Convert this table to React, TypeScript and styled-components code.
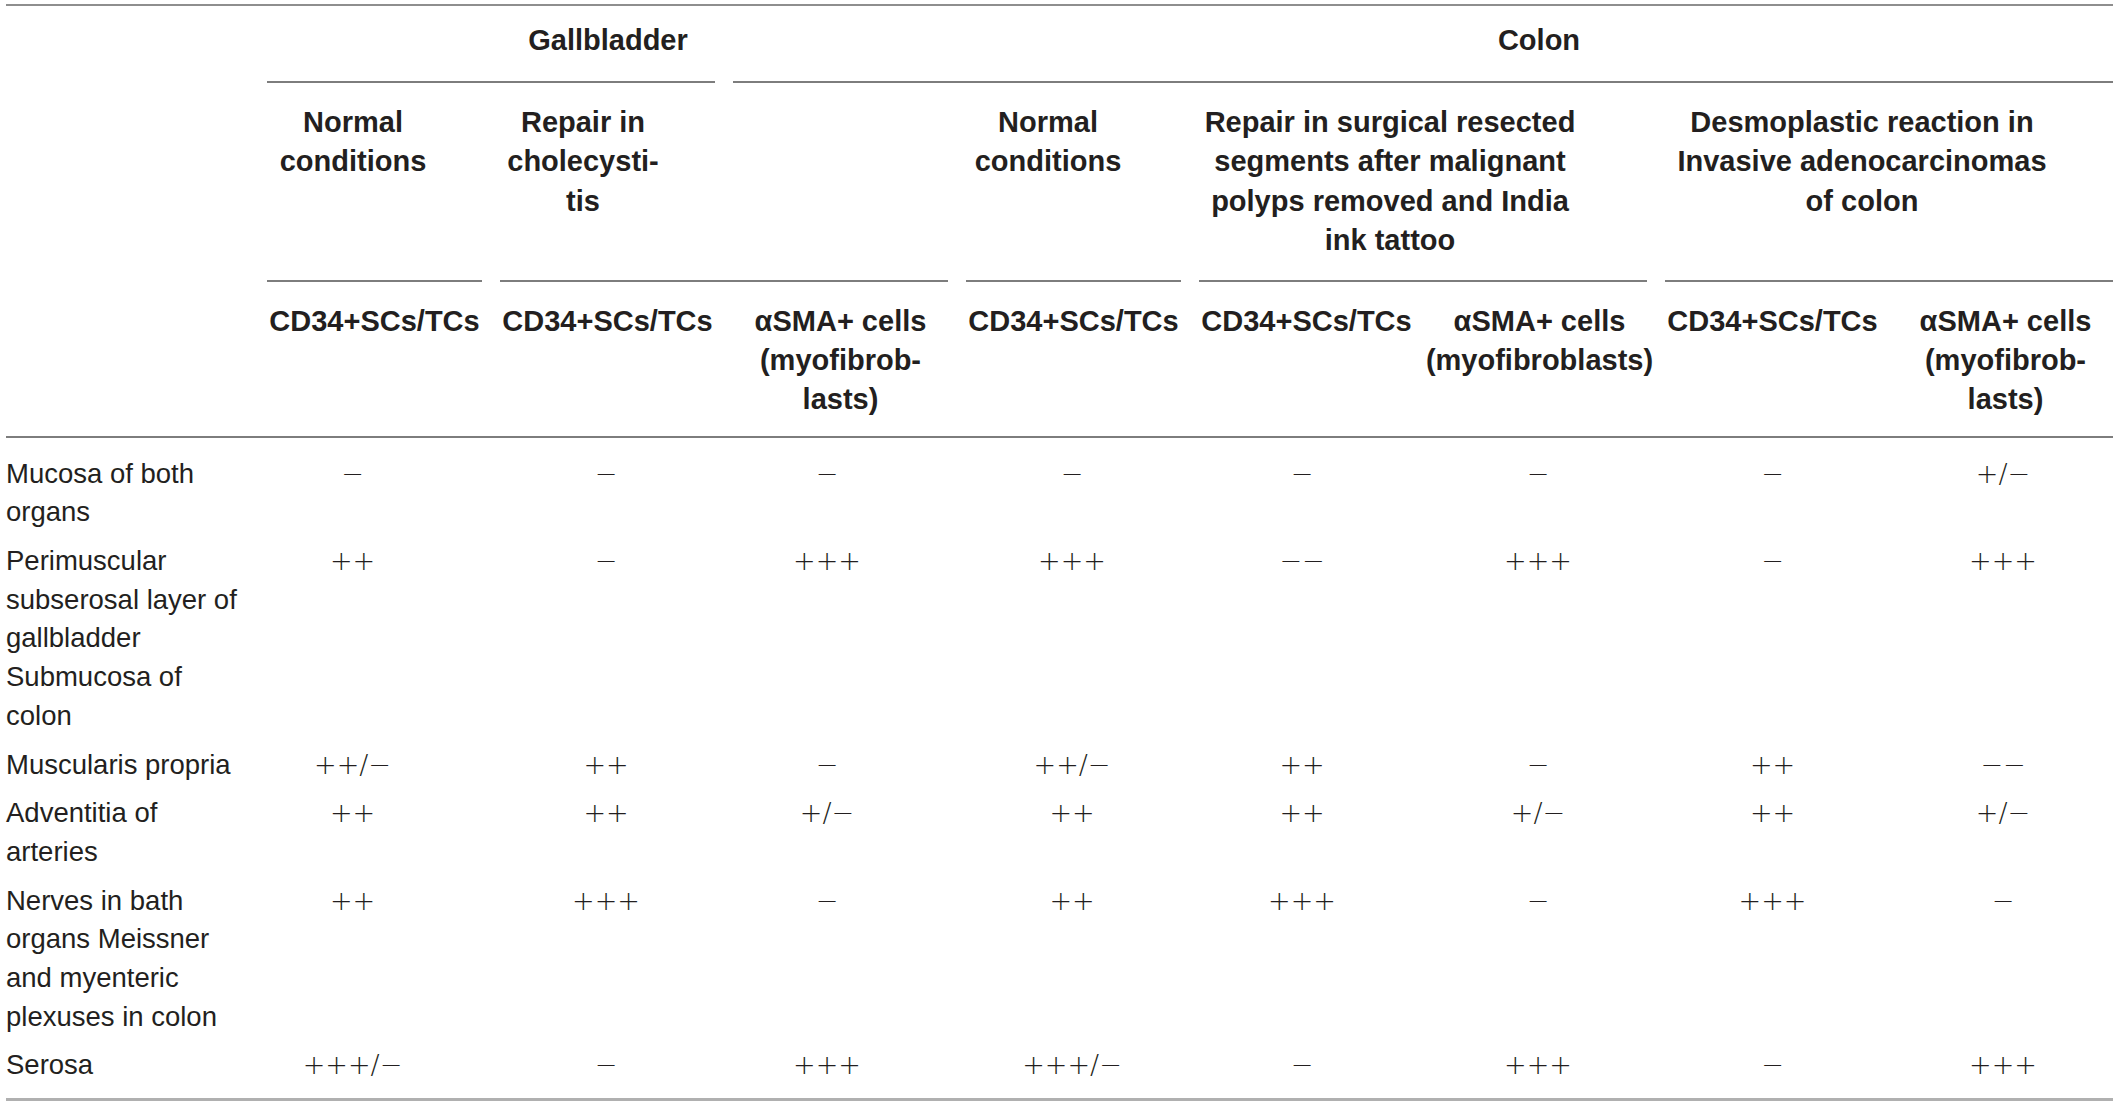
import React from "react";
import styled, { createGlobalStyle } from "styled-components";

const GlobalStyle = createGlobalStyle`
  html, body {
    margin: 0;
    padding: 0;
    background: #ffffff;
  }
  body {
    font-family: "Liberation Sans", Arial, sans-serif;
    color: #231f20;
  }
`;

const COLUMNS = "243px repeat(8, 215px)";
const RULE = "#7d7d7d";

const Table = styled.div`
  margin: 4px 0 0 6px;
  width: 2107px;
  border-top: 2px solid #8e8e8e;
`;

const Row = styled.div`
  display: grid;
  grid-template-columns: ${COLUMNS};
  column-gap: 18px;
`;

const Head = styled.div`
  font-weight: 700;
  font-size: 29px;
  line-height: 39.2px;
  color: #231f20;
`;

const GroupCell = styled.div<{ $span: string; $shift: number }>`
  grid-column: ${(p) => p.$span};
  padding: 15px 0 21px ${(p) => p.$shift}px;
  border-bottom: 2px solid ${RULE};
  text-align: center;
`;

const SubCell = styled.div<{ $span: string; $shift: number }>`
  grid-column: ${(p) => p.$span};
  display: flex;
  justify-content: center;
  padding: 20px ${(p) => p.$shift}px 20px 0;
  border-bottom: 2px solid ${RULE};
`;

const ColumnRow = styled(Row)`
  border-bottom: 2px solid ${RULE};
`;

const ColumnCell = styled.div`
  display: flex;
  justify-content: center;
  padding: 20px 0 16px;
`;

const Lines = styled.span`
  text-align: center;
  white-space: nowrap;
`;

const Body = styled.div`
  padding: 12px 0 8px;
  border-bottom: 3px solid #b0b0b0;
`;

const BodyRow = styled(Row)`
  padding: 5px 0;
`;

const Label = styled.div`
  font-size: 27.5px;
  line-height: 38.7px;
  white-space: nowrap;
  color: #231f20;
`;

const Value = styled.div<{ $nudge: number }>`
  font-family: "DejaVu Sans", "Liberation Sans", sans-serif;
  font-weight: 200;
  font-size: 27px;
  line-height: 38.7px;
  text-align: center;
  white-space: nowrap;
  padding-right: ${(p) => p.$nudge}px;
  color: #231f20;
`;

const breakLines = (lines: string[]) =>
  lines.map((l, i) => (
    <React.Fragment key={i}>
      {i > 0 && <br />}
      {l}
    </React.Fragment>
  ));

const CD34 = "CD34+SCs/TCs";

const columnHeads: string[][] = [
  [CD34],
  [CD34],
  ["αSMA+ cells", "(myofibrob-", "lasts)"],
  [CD34],
  [CD34],
  ["αSMA+ cells", "(myofibroblasts)"],
  [CD34],
  ["αSMA+ cells", "(myofibrob-", "lasts)"],
];

// small per-column offsets so values sit where the source table put them
const nudges = [44, 3, 27, 3, 9, 3, 0, 5];

const M = "−";

const rows = [
  {
    label: ["Mucosa of both", "organs"],
    values: [M, M, M, M, M, M, M, `+/${M}`],
  },
  {
    label: [
      "Perimuscular",
      "subserosal layer of",
      "gallbladder",
      "Submucosa of",
      "colon",
    ],
    values: ["++", M, "+++", "+++", M + M, "+++", M, "+++"],
  },
  {
    label: ["Muscularis propria"],
    values: [`++/${M}`, "++", M, `++/${M}`, "++", M, "++", M + M],
  },
  {
    label: ["Adventitia of", "arteries"],
    values: ["++", "++", `+/${M}`, "++", "++", `+/${M}`, "++", `+/${M}`],
  },
  {
    label: [
      "Nerves in bath",
      "organs Meissner",
      "and myenteric",
      "plexuses in colon",
    ],
    values: ["++", "+++", M, "++", "+++", M, "+++", M],
  },
  {
    label: ["Serosa"],
    values: [`+++/${M}`, M, "+++", `+++/${M}`, M, "+++", M, "+++"],
  },
];

export default function App() {
  return (
    <>
      <GlobalStyle />
      <Table>
        <Head>
          <Row>
            <div />
            <GroupCell $span="2 / 4" $shift={234}>
              Gallbladder
            </GroupCell>
            <GroupCell $span="4 / 10" $shift={232}>
              Colon
            </GroupCell>
          </Row>

          <Row>
            <div />
            <SubCell $span="2 / 3" $shift={43}>
              <Lines>{breakLines(["Normal", "conditions"])}</Lines>
            </SubCell>
            <SubCell $span="3 / 5" $shift={282}>
              <Lines>{breakLines(["Repair in", "cholecysti-", "tis"])}</Lines>
            </SubCell>
            <SubCell $span="5 / 6" $shift={51}>
              <Lines>{breakLines(["Normal", "conditions"])}</Lines>
            </SubCell>
            <SubCell $span="6 / 8" $shift={66}>
              <Lines>
                {breakLines([
                  "Repair in surgical resected",
                  "segments after malignant",
                  "polyps removed and India",
                  "ink tattoo",
                ])}
              </Lines>
            </SubCell>
            <SubCell $span="8 / 10" $shift={54}>
              <Lines>
                {breakLines([
                  "Desmoplastic reaction in",
                  "Invasive adenocarcinomas",
                  "of colon",
                ])}
              </Lines>
            </SubCell>
          </Row>

          <ColumnRow>
            <div />
            {columnHeads.map((h, i) => (
              <ColumnCell key={i}>
                <Lines>{breakLines(h)}</Lines>
              </ColumnCell>
            ))}
          </ColumnRow>
        </Head>

        <Body>
          {rows.map((r, i) => (
            <BodyRow key={i}>
              <Label>{breakLines(r.label)}</Label>
              {r.values.map((v, j) => (
                <Value key={j} $nudge={nudges[j]}>
                  {v}
                </Value>
              ))}
            </BodyRow>
          ))}
        </Body>
      </Table>
    </>
  );
}
